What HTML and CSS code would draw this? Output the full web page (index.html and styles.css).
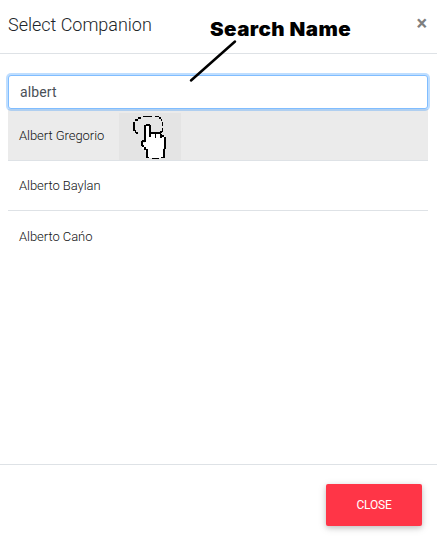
FILE: index.html
```html
<!DOCTYPE html>
<html lang="en">
<head>
<meta charset="utf-8">
<title>Select Companion</title>
<link rel="stylesheet" href="styles.css">
</head>
<body>
<div class="modal">
  <header class="modal-header">
    <h1 class="title">Select Companion</h1>
    <button class="dismiss" aria-label="Dismiss">×</button>
  </header>
  <main class="modal-body">
    <input class="search" type="text" value="albert">
    <ul class="results">
      <li class="active"><span>Albert Gregorio</span></li>
      <li><span>Alberto Baylan</span></li>
      <li><span>Alberto Cańo</span></li>
    </ul>
  </main>
  <footer class="modal-footer">
    <button class="close">CLOSE</button>
  </footer>
  <div class="note">Search Name</div>
  <svg class="pointer-line" width="50" height="46" viewBox="0 0 50 46"><path d="M4 42.500L48 3.500"/></svg>
  <div class="tap">
    <svg width="62" height="47" viewBox="0 0 62 47" shape-rendering="crispEdges">
      <path class="hand" d="M27 12h4v8h11v3h4v12h-2v10H28v-6h-2v-3h-3v-6h3z"/>
      <path class="ring" d="M24 3h9v1h-9zM36 3h4v1h-4zM19 4h3v2h-3zM16 6h3v2h-3zM14 9h2v9h-2zM16 17h1v3h-1zM17 19h2v2h-2zM40 4h2v2h-2zM42 6h1v2h-1zM43 9h1v4h-1zM43 15h1v4h-1zM41 18h2v2h-2z"/>
      <path class="edge" d="M27 11h4v2h-4zM25 12h2v17h-2zM30 12h2v12h-2zM32 19h10v2H32zM36 21h1v4h-1zM41 21h2v4h-2zM43 22h2v2h-2zM45 24h2v12h-2zM44 36h2v9h-2zM23 27h2v2h-2zM22 28h2v5h-2zM23 32h2v2h-2zM25 34h2v3h-2zM27 36h2v9h-2zM33 45h7v1h-7zM29 44h1v1h-1zM42 44h2v1h-2z"/>
    </svg>
  </div>
</div>
</body>
</html>
```
FILE: styles.css
```css
* { box-sizing: border-box; }
body { margin: 0; background: #fff; font-family: Roboto, "Liberation Sans", sans-serif; color: #212529; }
.modal { position: relative; width: 437px; height: 543px; display: flex; flex-direction: column; overflow: hidden; }
.modal-header { height: 54px; flex: none; display: flex; justify-content: space-between; align-items: flex-start; padding: 13px 10px 0 8px; border-bottom: 1px solid #dee2e6; }
.title { margin: 0; font-size: 18px; font-weight: 300; line-height: 24px; letter-spacing: -0.02px; }
.dismiss { border: 0; padding: 0; background: none; font: 700 20px/20px Roboto, sans-serif; color: #7f7f7f; }
.modal-body { flex: 1; padding: 21px 9px 0 8px; }
.search { display: block; width: 100%; height: 34px; padding: 0 11px; border: 1px solid #80bdff; border-radius: 3px; outline: 0; box-shadow: 0 0 0 2px rgba(0,123,255,.25); font: 400 14px/20px Roboto, sans-serif; letter-spacing: .1px; color: #495057; position: relative; background: #fff; }
.results { list-style: none; margin: 0; padding: 0; }
.results li { height: 50px; display: flex; align-items: center; padding: 0 11px; border-bottom: 1px solid #dee2e6; font-size: 13px; font-weight: 300; letter-spacing: -0.05px; color: #101214; }
.results .active { height: 52px; padding-top: 1px; background: #ebebeb; }
.results li:last-child { border-bottom: 0; padding-top: 0; }
.modal-footer { height: 79px; flex: none; display: flex; justify-content: flex-end; align-items: flex-start; padding: 19px 15px 0; border-top: 1px solid #dee2e6; }
.close { width: 96px; height: 42px; border: 0; border-radius: 2px; background: #ff3547; color: #fff; font: 400 12px/42px Roboto, sans-serif; letter-spacing: -.2px; padding: 0; box-shadow: 0 2px 5px rgba(0,0,0,.16), 0 2px 10px rgba(0,0,0,.12); }
.note { position: absolute; left: 210px; top: 18px; font: 900 19px/24px Inter, "Liberation Sans", sans-serif; color: #000; letter-spacing: .4px; white-space: nowrap; transform: scaleX(1.08); transform-origin: 0 0; }
.pointer-line { position: absolute; left: 187px; top: 38px; }
.pointer-line path { stroke: #000; stroke-width: 2.5; stroke-linecap: round; }
.tap { position: absolute; left: 119px; top: 113px; width: 62px; height: 47px; background: #e4e4e4; }
.tap svg { display: block; }
.hand { fill: #fff; }
.ring, .edge { fill: #000; }
```
